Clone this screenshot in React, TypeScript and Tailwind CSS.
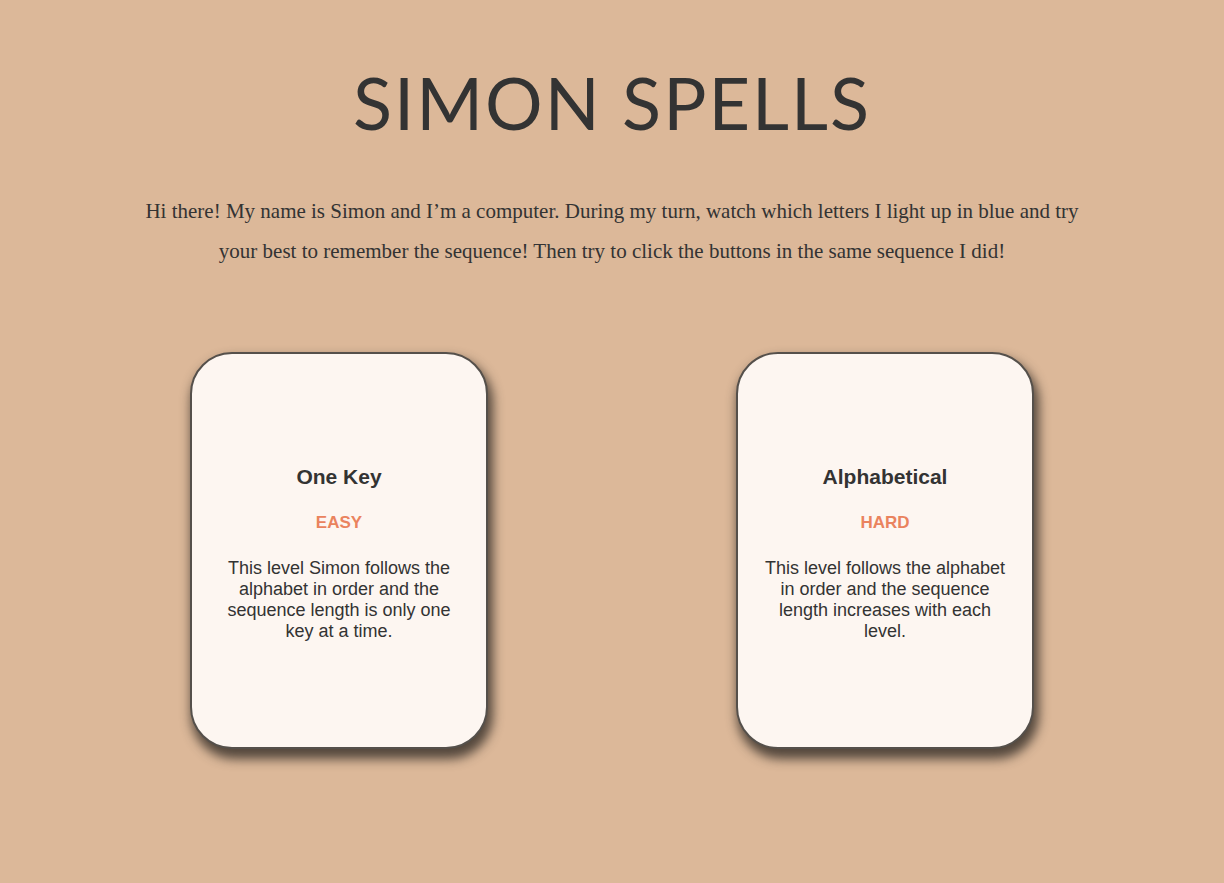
const levels = [
  {
    name: "One Key",
    difficulty: "EASY",
    text: "This level Simon follows the alphabet in order and the sequence length is only one key at a time.",
  },
  {
    name: "Alphabetical",
    difficulty: "HARD",
    text: "This level follows the alphabet in order and the sequence length increases with each level.",
  },
];

export default function App() {
  return (
    <div className="min-h-screen bg-[#dcb899] text-[#333333] pb-[130px]">
      <h1 className="pt-[66px] text-center text-[72px] leading-none font-normal tracking-[2px] font-['Lato','Open_Sans',sans-serif]">
        SIMON SPELLS
      </h1>

      <p className="mx-auto mt-[53px] w-[950px] text-center text-[21px] leading-[40px] font-['Liberation_Serif','Times_New_Roman',serif]">
        Hi there! My name is Simon and I’m a computer. During my turn, watch which letters I light up in blue and try your best to remember the sequence! Then try to click the buttons in the same sequence I did!
      </p>

      <div className="mt-[81px] flex justify-center gap-[248px]">
        {levels.map((lvl) => (
          <div
            key={lvl.name}
            className="flex h-[397px] w-[298px] flex-col items-center justify-center rounded-[42px] border-2 border-[#55504b] bg-[#fdf6f1] px-[24px] pt-[6px] text-center font-['Liberation_Sans',Arial,sans-serif] shadow-[3px_8px_11px_2px_rgba(60,52,45,0.85)]"
          >
            <h2 className="text-[21px] font-bold leading-[24px]">{lvl.name}</h2>
            <div className="mt-[24px] text-[17px] font-bold leading-[20px] text-[#ea835e]">{lvl.difficulty}</div>
            <p className="mt-[25px] text-[18px] leading-[21px]">{lvl.text}</p>
          </div>
        ))}
      </div>
    </div>
  );
}
